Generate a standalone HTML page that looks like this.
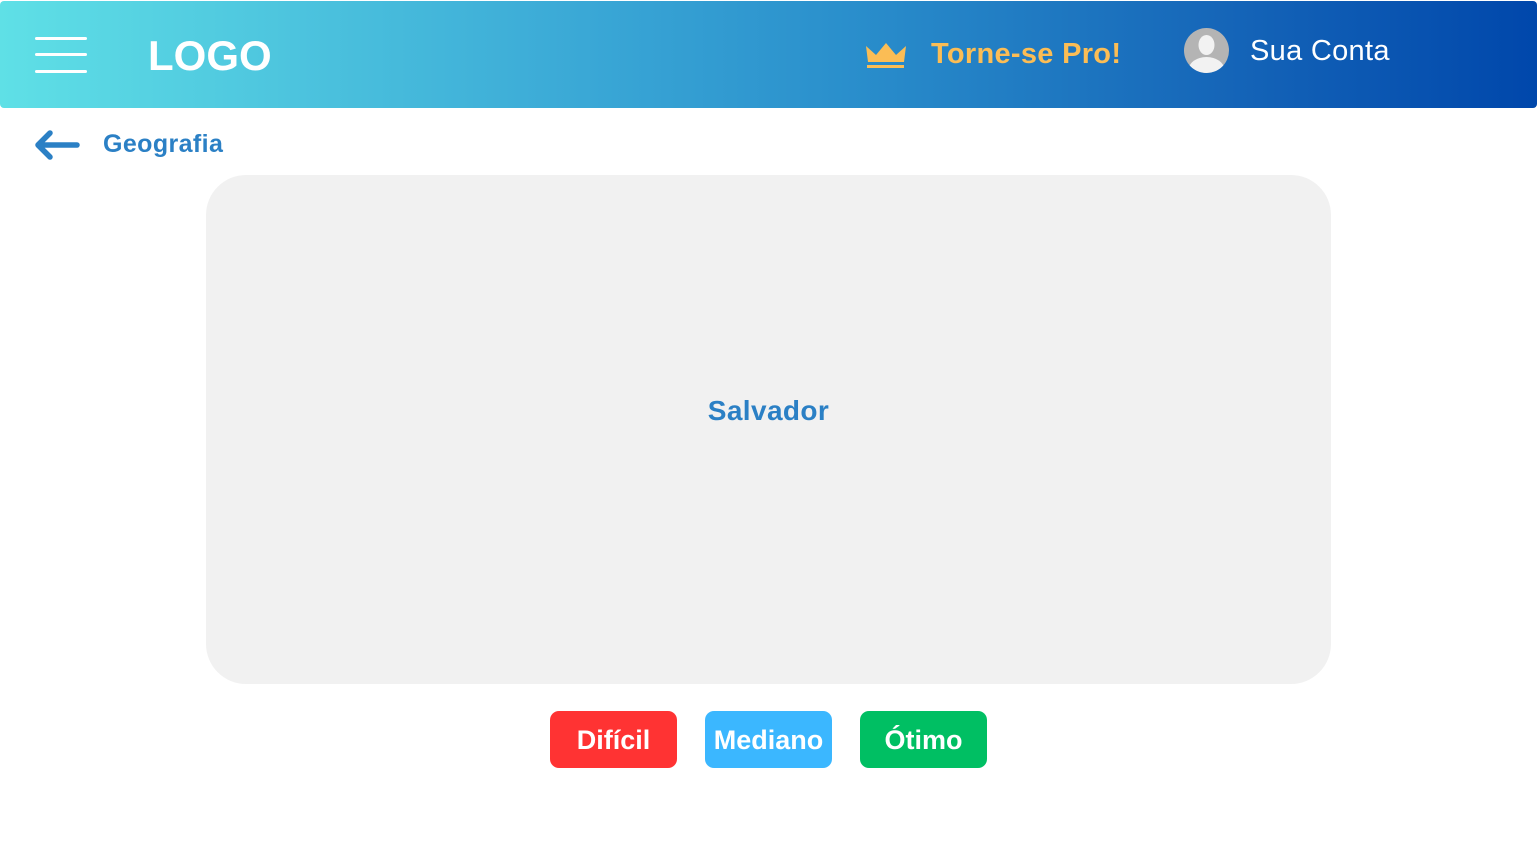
<!DOCTYPE html>
<html><head><meta charset="utf-8"><style>
*{margin:0;padding:0;box-sizing:border-box}
body{width:1537px;height:864px;background:#fff;font-family:"Liberation Sans",sans-serif;position:relative;overflow:hidden}
.hdr{position:absolute;left:0;top:1px;width:1537px;height:107px;border-radius:4px;background:linear-gradient(90deg,#5fe0e6 0%,#3aa8d6 38%,#2a8fcc 55%,#1565b8 80%,#0047ab 100%)}
.bar{position:absolute;left:35px;width:52px;height:3px;background:#fff;border-radius:2px}
.t{position:absolute;white-space:nowrap}
.btn{position:absolute;top:711px;width:127px;height:57px;border-radius:9px;color:#fff;font-weight:bold;font-size:27px;text-align:center;line-height:59px}
</style></head><body>
<div class="hdr">
<div class="bar" style="top:36px"></div><div class="bar" style="top:52px"></div><div class="bar" style="top:69px"></div>
<div class="t" style="left:148px;top:31px;font-size:42px;font-weight:bold;color:#fff">LOGO</div>
<svg style="position:absolute;left:865px;top:41px" width="42" height="27" viewBox="0 0 42 27"><path d="M1 4 L11 13 L21 1 L31 13 L41 4 L39 20 L3 20 Z" fill="#fbbd55"/><rect x="2" y="23" width="37" height="3" fill="#fbbd55"/></svg>
<div class="t" style="left:931px;top:37px;font-size:29px;font-weight:bold;color:#fbbd55;letter-spacing:0.3px">Torne-se Pro!</div>
<svg style="position:absolute;left:1184px;top:27px" width="45" height="45" viewBox="0 0 45 45"><defs><clipPath id="c"><circle cx="22.5" cy="22.5" r="22.5"/></clipPath></defs><circle cx="22.5" cy="22.5" r="22.5" fill="#b4b4b4"/><g clip-path="url(#c)" fill="#f2f2f2"><ellipse cx="22.5" cy="17" rx="8" ry="10"/><ellipse cx="22.5" cy="42" rx="18" ry="13"/></g></svg>
<div class="t" style="left:1250px;top:34px;font-size:29px;color:#fff;letter-spacing:0.3px">Sua Conta</div>
</div>
<svg style="position:absolute;left:34px;top:129px" width="46" height="32" viewBox="0 0 46 32"><path d="M43 16 H5 M16 4 L4 16 L16 28" stroke="#2b80c5" stroke-width="5.5" fill="none" stroke-linecap="round" stroke-linejoin="round"/></svg>
<div class="t" style="left:103px;top:130px;font-size:25px;font-weight:bold;color:#2b80c5;letter-spacing:0.4px">Geografia</div>
<div style="position:absolute;left:206px;top:175px;width:1125px;height:509px;border-radius:40px;background:#f1f1f1"></div>
<div class="t" style="left:0;width:1537px;text-align:center;top:395px;font-size:28px;font-weight:bold;color:#2b80c5;letter-spacing:0.4px">Salvador</div>
<div class="btn" style="left:550px;background:#ff3333">Difícil</div>
<div class="btn" style="left:705px;background:#3bb7ff">Mediano</div>
<div class="btn" style="left:860px;background:#00bf63">Ótimo</div>
</body></html>
